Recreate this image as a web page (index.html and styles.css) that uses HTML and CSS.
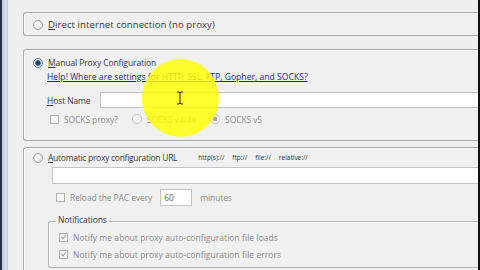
FILE: index.html
```html
<!DOCTYPE html>
<html>
<head>
<meta charset="utf-8">
<link rel="stylesheet" href="styles.css">
</head>
<body>
<div class="frame">
  <div class="edge-dark"></div>
  <div class="edge-blue"></div>
  <div class="panel">
    <div class="box box-direct">
      <div class="row">
        <span class="radio"></span>
        <span class="label big"><u>D</u>irect internet connection (no proxy)</span>
      </div>
    </div>

    <div class="box box-manual">
      <div class="row">
        <span class="radio checked"></span>
        <span class="label"><u>M</u>anual Proxy Configuration</span>
      </div>
      <div class="link-row"><a class="help">Help! Where are settings for HTTP, SSL, FTP, Gopher, and SOCKS?</a></div>
      <div class="host-row">
        <span class="label"><u>H</u>ost Name</span>
        <span class="input host-input"></span>
      </div>
      <div class="socks-row">
        <span class="check dis"></span>
        <span class="label dim">SOCKS proxy?</span>
        <span class="radio dis"></span>
        <span class="label dim">SOCKS v4/4a</span>
        <span class="radio dis checked-dis"></span>
        <span class="label dim">SOCKS v5</span>
      </div>
    </div>

    <div class="box box-auto">
      <div class="row">
        <span class="radio"></span>
        <span class="label tight"><u>A</u>utomatic proxy configuration URL</span>
        <span class="protos"><span>http(s)://</span><span>ftp://</span><span>file://</span><span>relative://</span></span>
      </div>
      <div class="url-row"><span class="input url-input"></span></div>
      <div class="reload-row">
        <span class="check dis"></span>
        <span class="label dim">Reload the PAC every</span>
        <span class="input mins">60</span>
        <span class="label dim">minutes</span>
      </div>
      <div class="notif">
        <span class="legend">Notifications</span>
        <div class="notif-row">
          <span class="check dis ticked"></span>
          <span class="label dim wide">Notify me about proxy auto-configuration file loads</span>
        </div>
        <div class="notif-row">
          <span class="check dis ticked"></span>
          <span class="label dim wide">Notify me about proxy auto-configuration file errors</span>
        </div>
      </div>
    </div>
  </div>
  <div class="edge-right"></div>
</div>
<div class="highlight"></div>
<svg class="ibeam" width="8" height="14" viewBox="0 0 8 14"><path d="M1 1h2l1 1l1-1h2M4 2v10M1 13h2l1-1l1 1h2" fill="none" stroke="#222" stroke-width="1"/></svg>
</body>
</html>
```
FILE: styles.css
```css
html, body {
  margin: 0;
  padding: 0;
  width: 480px;
  height: 270px;
  overflow: hidden;
  background: #f0f0f0;
  font-family: "Open Sans", "Noto Sans", sans-serif;
  font-size: 8.5px;
  letter-spacing: -0.1px;
  color: #3a3a3a;
}
.frame {
  display: flex;
  width: 480px;
  height: 270px;
}
.edge-dark { width: 2px; background: #2c3038; }
.edge-blue { width: 5px; background: linear-gradient(90deg, #b8d0e8, #d6e4f2); border-right: 1px solid #c8ccd2; }
.edge-right { width: 2px; background: #111; }
.panel {
  flex: 1;
  padding-left: 15px;
  background: #efefef;
  display: flex;
  flex-direction: column;
}
.box {
  border: 1px solid #a9a9a9;
  border-right: none;
  border-radius: 3px 0 0 3px;
  box-shadow: inset 1px 1px 0 #fbfbfb;
  background: #f0f0f0;
  box-sizing: border-box;
}
.box-direct { margin-top: 12px; height: 24px; display: flex; align-items: center; padding-top: 1px; }
.box-manual { margin-top: 13px; height: 92px; }
.box-auto { margin-top: 6px; flex: 1; border-bottom: none; border-radius: 3px 0 0 0; }
.row { display: flex; align-items: center; padding-left: 9px; height: 13px; }
.box-manual .row { margin-top: 6px; }
.box-auto .row { margin-top: 3px; }
.label { white-space: nowrap; }
.big { font-size: 9.5px; letter-spacing: 0.1px; }
.tight { letter-spacing: -0.28px; }
.wide { letter-spacing: 0.05px; }
.dim { color: #8c8c8c; }
u { text-decoration: underline; text-underline-offset: 1px; }
.radio {
  width: 8px; height: 8px;
  border-radius: 50%;
  border: 1px solid #9aa0a6;
  background: radial-gradient(circle at 40% 40%, #ffffff, #dcdcdc);
  margin-right: 5px;
  flex: none;
}
.radio.checked {
  background: radial-gradient(circle, #1f3f6a 0 2px, #5a7fb0 2.5px, #e8eef6 3.5px);
  border-color: #6a7c92;
}
.radio.dis { border-color: #c2c2c2; background: #f4f4f4; }
.radio.checked-dis { background: radial-gradient(circle, #a8a8a8 0 2px, #f4f4f4 2.6px); }
.check {
  width: 7px; height: 7px;
  border: 1px solid #b0b0b0;
  background: #f6f6f6;
  flex: none;
  margin-right: 5px;
  position: relative;
}
.check.ticked::after {
  content: "";
  position: absolute;
  left: 2px; top: 0px;
  width: 2px; height: 4px;
  border: solid #a0a0a0;
  border-width: 0 1px 1px 0;
  transform: rotate(40deg);
}
.link-row { padding-left: 23px; margin-top: 1px; height: 13px; display: flex; align-items: center; }
.help { color: #1a2a9a; text-decoration: underline; white-space: nowrap; letter-spacing: 0.06px; }
.host-row { display: flex; align-items: center; padding-left: 23px; margin-top: 9px; height: 16px; }
.host-row .label { width: 53px; }
.input {
  background: #fff;
  border: 1px solid #c4c4c4;
  border-right: none;
  box-sizing: border-box;
}
.host-input { flex: 1; height: 16px; }
.socks-row { display: flex; align-items: center; padding-left: 26px; margin-top: 4px; height: 14px; }
.socks-row .label { margin-right: 14px; }
.protos { display: flex; gap: 8px; margin-left: 21px; font-size: 6.5px; letter-spacing: 0; color: #333; }
.url-row { display: flex; padding-left: 28px; margin-top: 3px; }
.url-input { flex: 1; height: 17px; }
.reload-row { display: flex; align-items: center; padding-left: 32px; margin-top: 5px; height: 17px; }
.mins { width: 32px; height: 17px; border-right: 1px solid #c4c4c4; margin: 0 8px 0 8px; padding-left: 3px; color: #666; line-height: 15px; }
.notif {
  margin: 15px 0 0 24px;
  border: 1px solid #b4b4b4;
  border-right: none;
  border-radius: 3px 0 0 3px;
  box-shadow: inset 1px 1px 0 #fbfbfb;
  height: 47px;
  position: relative;
  padding-top: 7px;
  box-sizing: border-box;
}
.legend {
  position: absolute;
  left: 7px; top: -8px;
  background: #f0f0f0;
  padding: 0 2px;
  color: #3a3a3a;
}
.notif-row { display: flex; align-items: center; padding-left: 10px; height: 17px; }
.highlight {
  position: absolute;
  left: 142px; top: 59px;
  width: 77px; height: 78px;
  border-radius: 50%;
  background: rgba(255, 255, 0, 0.82);
}
.ibeam { position: absolute; left: 176px; top: 91px; }
```
